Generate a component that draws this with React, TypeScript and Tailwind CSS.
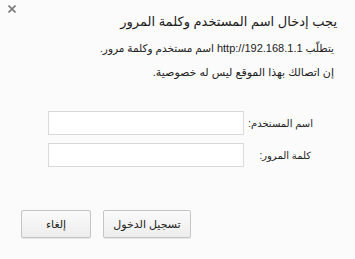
import React from "react";

const fontStack = { fontFamily: '"Liberation Sans", "DejaVu Sans", sans-serif' };

const CloseIcon = () => (
  <svg width="8" height="8" viewBox="0 0 8 8" className="block">
    <path d="M0.5 0.5 L7.5 7.5 M7.5 0.5 L0.5 7.5" stroke="#7a7a7a" strokeWidth="1.6" />
  </svg>
);

const App = () => {
  return (
    <div
      dir="rtl"
      className="relative w-[355px] h-[259px] bg-[#fbfbfb] text-[#222] overflow-hidden"
      style={fontStack}
    >
      {/* Close button */}
      <button className="absolute left-[8px] top-[5px] p-0">
        <CloseIcon />
      </button>

      <div className="pr-[18px] pl-[21px]">
        {/* Heading */}
        <h1 className="mt-[14px] h-[16px] leading-[16px] text-[13px] text-[#1a1a1a]">
          يجب إدخال اسم المستخدم وكلمة المرور
        </h1>
        <p className="mt-[8px] h-[20px] leading-[20px] text-[10.5px] pr-[3px] text-[#222]">
          يتطلّب <span dir="ltr" className="text-[11px]">http://192.168.1.1</span> اسم مستخدم وكلمة مرور.
        </p>
        <p className="mt-[4px] h-[20px] leading-[20px] text-[11px] pr-[3px] text-[#222]">
          إن اتصالك بهذا الموقع ليس له خصوصية.
        </p>

        {/* Form */}
        <div className="mt-[29px] pr-[24px] flex flex-col gap-[8px]">
          <div className="flex items-center gap-[5px]">
            <label className="w-[64px] shrink-0 whitespace-nowrap text-[10px] text-[#222]">اسم المستخدم:</label>
            <input className="w-[196px] h-[24px] bg-white border border-[#d9d9d9] outline-none px-1 text-[12px]" />
          </div>
          <div className="flex items-center gap-[5px]">
            <label className="w-[64px] shrink-0 whitespace-nowrap text-[10px] text-[#222] pr-[2px]">كلمة المرور:</label>
            <input
              type="password"
              className="w-[196px] h-[24px] bg-white border border-[#d9d9d9] outline-none px-1 text-[12px]"
            />
          </div>
        </div>

        {/* Actions */}
        <div className="mt-[43px] flex justify-end gap-[12px]">
          <button className="w-[88px] h-[28px] rounded-[2px] border border-[#c4c4c4] bg-gradient-to-b from-[#fafafa] to-[#ededed] shadow-[0_1px_0_rgba(0,0,0,0.08)] text-[11px] text-[#222]">
            تسجيل الدخول
          </button>
          <button className="w-[70px] h-[28px] rounded-[2px] border border-[#c4c4c4] bg-gradient-to-b from-[#fafafa] to-[#ededed] shadow-[0_1px_0_rgba(0,0,0,0.08)] text-[11px] text-[#222]">
            إلغاء
          </button>
        </div>
      </div>
    </div>
  );
};

export default App;
